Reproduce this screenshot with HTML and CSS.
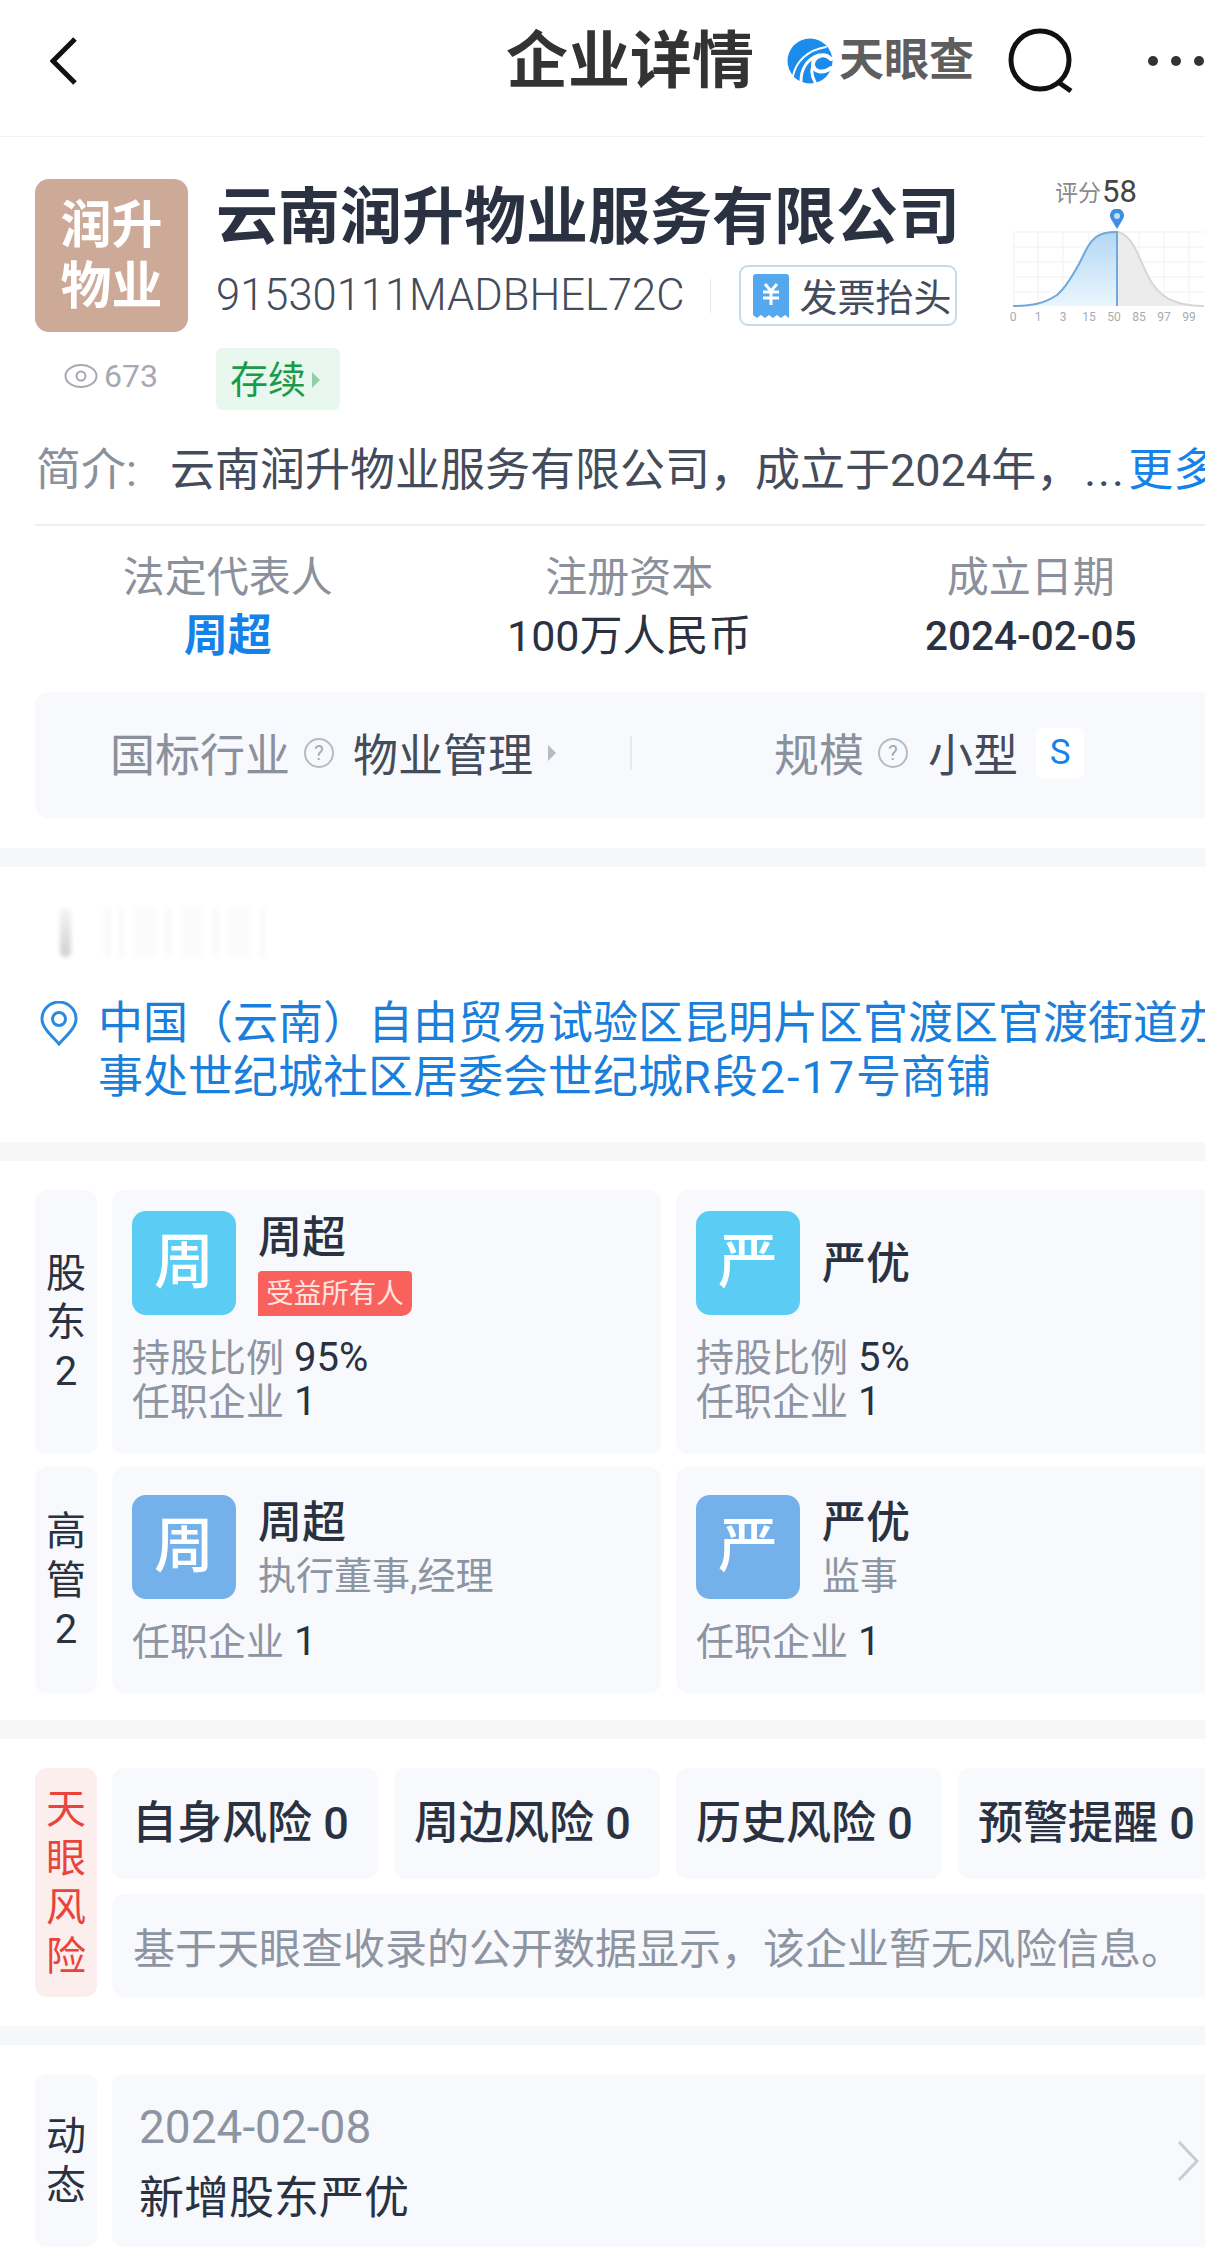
FILE: index.html
```html
<!DOCTYPE html>
<html lang="zh-CN">
<head>
    <meta charset="UTF-8">
    <meta name="viewport" content="width=device-width, initial-scale=1.0">
    <title>企业详情</title>
    <link rel="stylesheet" href="styles.css">
</head>
<body>
    <div id="page">
        <header class="top-bar">
            <svg class="back-icon" width="27" height="48" viewBox="0 0 27 48"><path d="M25 2 L3 24 L25 46" fill="none" stroke="#111" stroke-width="5"/></svg>
            <h1 class="page-title">企业详情</h1>
            <div class="brand">
                <svg class="brand-mark" width="46" height="46" viewBox="0 0 46 46">
                    <circle cx="23" cy="23" r="22.5" fill="#1b8ceb"/>
                    <g fill="none" stroke="#fff" stroke-linecap="round">
                        <path d="M6 38 C9 23 21 12 39 9" stroke-width="2"/>
                        <path d="M14 43 C14 31 20 21 32 17" stroke-width="3"/>
                        <path d="M44 21 C37 14 26 18 26 27 C27 34 36 36 44 30" stroke-width="4"/>
                        <path d="M28 44 C25 39 24 33 26 28" stroke-width="3"/>
                    </g>
                </svg>
                <span class="brand-name">天眼查</span>
            </div>
            <svg class="search-icon" width="66" height="66" viewBox="0 0 66 66"><circle cx="32" cy="32" r="29" fill="none" stroke="#111" stroke-width="5"/><path d="M50 54 L63 63" fill="none" stroke="#111" stroke-width="5"/></svg>
            <div class="dots"><i></i><i></i><i></i></div>
        </header>

        <section class="company">
            <div class="company-side">
                <div class="logo-box">润升<br>物业</div>
                <div class="views">
                    <svg width="34" height="26" viewBox="0 0 34 26"><ellipse cx="17" cy="13" rx="15.5" ry="11" fill="none" stroke="#a4a9b2" stroke-width="2"/><circle cx="17" cy="13" r="4.5" fill="none" stroke="#a4a9b2" stroke-width="2"/></svg>
                    <span>673</span>
                </div>
            </div>
            <div class="company-main">
                <h2 class="company-name">云南润升物业服务有限公司</h2>
                <div class="code-row">
                    <span class="credit-code">91530111MADBHEL72C</span>
                    <span class="code-sep"></span>
                    <span class="invoice">
                        <svg width="36" height="44" viewBox="0 0 36 44"><path d="M3 0 H33 Q36 0 36 3 V44 L32 41 L28 44 L24 41 L20 44 L16 41 L12 44 L8 41 L4 44 L0 41 V3 Q0 0 3 0 Z" fill="#53a8ee"/><path d="M12 10 L18 17 L24 10 M18 17 V31 M10 18 H26 M10 24 H26" fill="none" stroke="#fff" stroke-width="3"/></svg>
                        发票抬头
                    </span>
                </div>
                <div class="status">存续<i class="tri tri-green"></i></div>
            </div>
            <div class="score">
                <div class="score-title"><span>评分</span><b>58</b></div>
                <svg class="score-pin" width="14" height="20" viewBox="0 0 14 20"><path d="M7 20 L1 10 A7 7 0 1 1 13 10 Z" fill="#3f8fe0"/><circle cx="7" cy="7" r="3" fill="#bfe0fa"/></svg>
                <svg class="score-chart" width="191" height="94" viewBox="0 0 191 94">
                    <defs>
                        <linearGradient id="score-fill" x1="0" y1="0" x2="0" y2="1">
                            <stop offset="0" stop-color="#b4d7f4"/>
                            <stop offset="1" stop-color="#e9f6fd"/>
                        </linearGradient>
                    </defs>
                    <g stroke="#eef1f4" stroke-width="1">
                        <path d="M0 0 H191 M0 15 H191 M0 30 H191 M0 45 H191 M0 60 H191"/>
                        <path d="M1 0 V74 M25 0 V74 M50 0 V74 M76 0 V74 M126 0 V74 M151 0 V74 M176 0 V74"/>
                    </g>
                    <path d="M104 0 C112 1 118 8 123 18 C128 28 133 42 139 51 C145 60 153 67 163 70 C172 73 180 74 191 74 H104 Z" fill="#ececed"/>
                    <path d="M104 0 C112 1 118 8 123 18 C128 28 133 42 139 51 C145 60 153 67 163 70 C172 73 180 74 191 74" fill="none" stroke="#d6d7d9" stroke-width="2"/>
                    <path d="M0 74 C20 74 32 71 44 63 C54 55 60 42 66 32 C72 20 76 10 83 5 C88 1 94 0 104 0 V74 Z" fill="url(#score-fill)"/>
                    <path d="M0 74 C20 74 32 71 44 63 C54 55 60 42 66 32 C72 20 76 10 83 5 C88 1 94 0 104 0 V74" fill="none" stroke="#6ea8dc" stroke-width="2"/>
                    <g fill="#a3acb5" font-size="12" text-anchor="middle">
                        <text x="0" y="89">0</text><text x="25" y="89">1</text><text x="50" y="89">3</text><text x="76" y="89">15</text><text x="101" y="89">50</text><text x="126" y="89">85</text><text x="151" y="89">97</text><text x="176" y="89">99</text>
                    </g>
                </svg>
            </div>
        </section>

        <div class="intro"><span class="intro-label">简介:</span><span class="intro-text">云南润升物业服务有限公司，成立于2024年，</span><span class="ellipsis">...</span><span class="more">更多</span></div>

        <div class="stats">
            <div class="stat"><div class="stat-label">法定代表人</div><div class="stat-value link">周超</div></div>
            <div class="stat"><div class="stat-label">注册资本</div><div class="stat-value">100万人民币</div></div>
            <div class="stat"><div class="stat-label">成立日期</div><div class="stat-value date">2024-02-05</div></div>
        </div>

        <div class="industry">
            <span class="muted">国标行业</span>
            <span class="help help-a">?</span>
            <span class="strong">物业管理</span>
            <i class="tri tri-gray"></i>
            <span class="industry-sep"></span>
            <span class="muted">规模</span>
            <span class="help help-b">?</span>
            <span class="strong">小型</span>
            <span class="size-badge">S</span>
        </div>

        <div class="band band-first"></div>

        <section class="address">
            <div class="redacted"><i class="bar-a"></i><i class="bar-b"></i><i class="bar-b"></i><i class="bar-c"></i><i class="bar-b"></i><i class="bar-c"></i><i class="bar-b"></i><i class="bar-c"></i><i class="bar-b"></i></div>
            <div class="address-row">
                <svg width="38" height="45" viewBox="0 0 38 45"><path d="M19 43 C12 35 2 27 2 18 A17 17 0 0 1 36 18 C36 27 26 35 19 43 Z" fill="none" stroke="#2b8ae0" stroke-width="3"/><circle cx="19" cy="18" r="6.5" fill="none" stroke="#2b8ae0" stroke-width="3"/></svg>
                <div class="address-text">中国（云南）自由贸易试验区昆明片区官渡区官渡街道办<br>事处世纪城社区居委会世纪城<span class="address-num">R段2-17</span>号商铺</div>
            </div>
        </section>

        <div class="band"></div>

        <section class="people">
            <div class="side-label">股<br>东<br>2</div>
            <div class="card person">
                <div class="person-head">
                    <div class="avatar sky">周</div>
                    <div><div class="person-name">周超</div><div class="owner-tag">受益所有人</div></div>
                </div>
                <div class="person-stats"><div><span>持股比例</span> 95%</div><div><span>任职企业</span> 1</div></div>
            </div>
            <div class="card person">
                <div class="person-head">
                    <div class="avatar sky">严</div>
                    <div><div class="person-name">严优</div></div>
                </div>
                <div class="person-stats"><div><span>持股比例</span> 5%</div><div><span>任职企业</span> 1</div></div>
            </div>
            <div class="side-label">高<br>管<br>2</div>
            <div class="card person person-low">
                <div class="person-head">
                    <div class="avatar blue">周</div>
                    <div><div class="person-name">周超</div><div class="person-role">执行董事,经理</div></div>
                </div>
                <div class="person-stats"><div><span>任职企业</span> 1</div></div>
            </div>
            <div class="card person person-low">
                <div class="person-head">
                    <div class="avatar blue">严</div>
                    <div><div class="person-name">严优</div><div class="person-role">监事</div></div>
                </div>
                <div class="person-stats"><div><span>任职企业</span> 1</div></div>
            </div>
        </section>

        <div class="band"></div>

        <section class="risk">
            <div class="side-label red">天<br>眼<br>风<br>险</div>
            <div class="risk-body">
                <div class="risk-cards">
                    <div class="card risk-card">自身风险 0</div>
                    <div class="card risk-card">周边风险 0</div>
                    <div class="card risk-card">历史风险 0</div>
                    <div class="card risk-card">预警提醒 0</div>
                </div>
                <div class="card risk-note">基于天眼查收录的公开数据显示，该企业暂无风险信息。</div>
            </div>
        </section>

        <div class="band"></div>

        <section class="news">
            <div class="side-label">动<br>态</div>
            <div class="card news-card">
                <div class="news-date">2024-02-08</div>
                <div class="news-text">新增股东严优</div>
                <svg class="news-arrow" width="22" height="40" viewBox="0 0 22 40"><path d="M2 1 L20 20 L2 39" fill="none" stroke="#c9cdd3" stroke-width="3"/></svg>
            </div>
        </section>
    </div>
</body>
</html>
```

FILE: styles.css
```css
* {
    box-sizing: border-box;
}
body {
    margin: 0;
    background-color: #fff;
    font-family: Roboto, "Noto Sans CJK SC", sans-serif;
    color: #2a3242;
}
#page {
    width: 1205px;
    height: 2258px;
    overflow: hidden;
}
h1, h2 {
    margin: 0;
}

/* top bar */
.top-bar {
    display: flex;
    align-items: center;
    height: 137px;
    padding: 0 0 15px 50px;
    border-bottom: 1px solid #f1f2f3;
}
.back-icon {
    flex: none;
    margin-right: 429px;
}
.page-title {
    flex: none;
    padding-top: 3px;
    font-size: 62px;
    line-height: 72px;
    font-weight: 700;
    color: #333;
}
.brand {
    flex: none;
    display: flex;
    align-items: center;
    margin-left: 33px;
    margin-right: 34px;
}
.brand-mark {
    flex: none;
    margin-right: 6px;
}
.brand-name {
    font-size: 45px;
    line-height: 46px;
    font-weight: 700;
    color: #5e5e5e;
}
.search-icon {
    flex: none;
}
.dots {
    flex: none;
    display: flex;
    gap: 13px;
    margin-left: 74px;
}
.dots i {
    width: 10px;
    height: 10px;
    border-radius: 50%;
    background-color: #333;
}

/* company block */
.company {
    display: flex;
    height: 301px;
    padding: 42px 0 0 35px;
}
.company-side {
    flex: none;
    width: 153px;
    margin-right: 28px;
}
.logo-box {
    height: 153px;
    border-radius: 14px;
    background-color: #cda998;
    color: #fff;
    font-size: 51px;
    line-height: 61px;
    font-weight: 700;
    text-align: center;
    padding-top: 16px;
}
.views {
    display: flex;
    align-items: center;
    gap: 6px;
    margin-top: 31px;
    padding-left: 29px;
    font-size: 32px;
    line-height: 26px;
    color: #a4a9b2;
}
.company-main {
    flex: none;
    width: 742px;
}
.company-name {
    padding-top: 4px;
    font-size: 62px;
    line-height: 70px;
    font-weight: 700;
    white-space: nowrap;
    color: #2a3242;
}
.code-row {
    display: flex;
    align-items: center;
    height: 61px;
    margin-top: 12px;
}
.credit-code {
    font-size: 43.5px;
    font-weight: 300;
    color: #444c5c;
}
.code-sep {
    width: 1px;
    height: 34px;
    margin: 0 28px 0 26px;
    background-color: #e4e6e9;
}
.invoice {
    flex: none;
    display: flex;
    align-items: center;
    gap: 10px;
    width: 218px;
    height: 61px;
    padding: 0 0 3px 12px;
    border: 2px solid #c6dbe6;
    border-radius: 9px;
    font-size: 38px;
    color: #444c5c;
    white-space: nowrap;
}
.invoice svg {
    margin-top: 3px;
}
.status {
    display: flex;
    align-items: center;
    width: 124px;
    height: 62px;
    margin-top: 22px;
    padding: 2px 0 0 14px;
    border-radius: 6px;
    background-color: #e9f8ef;
    color: #1c9a4c;
    font-size: 38px;
    line-height: 60px;
}
.tri {
    display: inline-block;
    width: 0;
    height: 0;
    border-style: solid;
    border-color: transparent;
    border-width: 8px 0 8px 8px;
}
.tri-green {
    margin-left: 6px;
    border-left-color: #8fcfa7;
}
.tri-gray {
    margin: 0 74px 0 15px;
    border-left-color: #b6bac2;
}
.score {
    flex: none;
    display: flex;
    flex-direction: column;
    width: 191px;
    margin-left: 55px;
}
.score-title {
    display: flex;
    align-items: center;
    height: 30px;
    margin-top: -3px;
    margin-bottom: 3px;
    padding-left: 42px;
    color: #8a8a8a;
    font-size: 23px;
}
.score-title b {
    margin-left: 1px;
    font-size: 31px;
    font-weight: 400;
    color: #444;
}
.score-pin {
    margin: 0 0 0 97px;
}
.score-chart {
    overflow: visible;
    margin-top: 3px;
}

/* intro and stats */
.intro {
    display: flex;
    align-items: center;
    height: 88px;
    margin-left: 35px;
    padding: 0 0 21px 1px;
    border-bottom: 2px solid #eceef0;
    font-size: 45px;
    line-height: 60px;
    white-space: nowrap;
}
.intro span {
    flex: none;
}
.intro-label {
    width: 134px;
    color: #8a909c;
}
.intro-text {
    color: #444c5c;
}
.ellipsis {
    width: 47px;
    padding-left: 3px;
    color: #444c5c;
    letter-spacing: 2px;
}
.more {
    color: #1482e8;
}
.stats {
    display: grid;
    grid-template-columns: repeat(3, 401.5px);
    padding: 26px 0 0 27px;
}
.stat {
    text-align: center;
}
.stat-label {
    font-size: 42px;
    line-height: 52px;
    color: #8a909c;
}
.stat-value {
    margin-top: 6px;
    font-size: 43px;
    line-height: 52px;
    font-weight: 400;
    white-space: nowrap;
}
.stat-value.link {
    color: #1482e8;
    font-weight: 700;
    font-size: 44px;
}
.stat-value.date {
    font-weight: 500;
    font-size: 40.5px;
}

.industry {
    display: flex;
    align-items: center;
    width: 1190px;
    height: 126px;
    margin: 30px 0 0 35px;
    padding: 0 0 5px 75px;
    border-radius: 14px;
    background-color: #f7f9fc;
    font-size: 45px;
    white-space: nowrap;
}
.muted {
    color: #8a909c;
}
.strong {
    color: #444c5c;
}
.help {
    display: flex;
    align-items: center;
    justify-content: center;
    width: 30px;
    height: 30px;
    border: 2px solid #b6bac2;
    border-radius: 50%;
    color: #a4a9b2;
    font-size: 20px;
    line-height: 1;
}
.help-a {
    margin: 0 19px 0 14px;
}
.help-b {
    margin: 0 20px 0 14px;
}
.industry-sep {
    width: 2px;
    height: 34px;
    margin-right: 142px;
    background-color: #e7e9ee;
}
.size-badge {
    width: 48px;
    height: 50px;
    margin-left: 18px;
    border-radius: 5px;
    background-color: #fff;
    color: #1482e8;
    font-size: 35px;
    line-height: 50px;
    text-align: center;
}

.band {
    height: 19px;
    background-color: #f6f7f9;
}
.band-first {
    margin-top: 30px;
}

/* address */
.address {
    height: 275px;
    padding: 41px 0 0 35px;
}
.redacted {
    display: flex;
    align-items: stretch;
    gap: 11px;
    height: 49px;
    padding-left: 25px;
    filter: blur(2px);
}
.redacted i {
    display: block;
}
.bar-a {
    width: 11px;
    margin-right: 24px;
    border-radius: 6px;
    background: linear-gradient(#f5f5f5, #d0d0d0);
}
.bar-b {
    width: 3px;
    background-color: #f4f4f4;
}
.bar-c {
    width: 22px;
    background-color: #fbfbfb;
}
.address-row {
    display: flex;
    margin-top: 44px;
    padding-left: 5px;
    color: #1a7fdc;
}
.address-row svg {
    flex: none;
    margin-right: 20px;
}
.address-text {
    font-size: 45px;
    line-height: 54px;
    white-space: nowrap;
    margin-top: -4px;
}
.address-num {
    letter-spacing: 2px;
}

/* shared cards */
.card {
    border-radius: 12px;
    background-color: #f7f9fc;
}
.side-label {
    display: flex;
    align-items: center;
    justify-content: center;
    border-radius: 12px;
    background-color: #f7f9fc;
    font-size: 40px;
    line-height: 49px;
    text-align: center;
}
.side-label.red {
    background-color: #fdeeee;
    color: #e8443c;
}

/* people */
.people {
    display: grid;
    grid-template-columns: 62px 549px 548px;
    grid-template-rows: 264px 226px;
    column-gap: 15px;
    row-gap: 13px;
    padding: 29px 0 27px 35px;
}
.person {
    padding: 21px 20px 0;
}
.person-low {
    padding-top: 28px;
}
.person-head {
    display: flex;
    align-items: center;
    gap: 22px;
    height: 104px;
}
.avatar {
    flex: none;
    width: 104px;
    height: 104px;
    border-radius: 14px;
    color: #fff;
    font-size: 60px;
    line-height: 104px;
    font-weight: 500;
    text-align: center;
}
.sky {
    background-color: #5bcdf5;
}
.blue {
    background-color: #74b1ea;
}
.person-name {
    padding-top: 2px;
    font-size: 44px;
    line-height: 50px;
    font-weight: 500;
}
.owner-tag {
    width: 154px;
    height: 45px;
    margin-top: 8px;
    border-radius: 4px 4px 10px 0;
    background-color: #f9625c;
    color: #ffe4e0;
    font-size: 27.5px;
    line-height: 45px;
    text-align: center;
}
.person-role {
    margin-top: 5px;
    font-size: 38px;
    line-height: 46px;
    color: #8d94a2;
    white-space: nowrap;
}
.person-stats {
    margin-top: 21px;
    font-size: 40px;
    line-height: 44px;
}
.person-stats span {
    color: #8d94a2;
    font-size: 38px;
}

/* risk */
.risk {
    display: flex;
    gap: 15px;
    height: 287px;
    padding: 29px 0 0 35px;
}
.risk .side-label {
    flex: none;
    width: 62px;
    height: 229px;
}
.risk-body {
    flex: none;
    width: 1110px;
}
.risk-cards {
    display: grid;
    grid-template-columns: repeat(4, 266px);
    gap: 16px;
}
.risk-card {
    height: 111px;
    padding: 31px 0 0 20px;
    font-size: 45px;
    line-height: 50px;
    font-weight: 500;
    white-space: nowrap;
}
.risk-note {
    display: flex;
    align-items: center;
    height: 103px;
    margin-top: 15px;
    padding-left: 21px;
    color: #8d94a2;
    font-size: 42px;
    white-space: nowrap;
}

/* news */
.news {
    display: flex;
    gap: 15px;
    padding: 29px 0 0 35px;
}
.news .side-label {
    flex: none;
    width: 62px;
    height: 173px;
}
.news-card {
    position: relative;
    flex: none;
    width: 1110px;
    height: 173px;
    padding: 27px 0 0 27px;
}
.news-date {
    font-size: 46px;
    line-height: 52px;
    color: #8d94a2;
}
.news-text {
    margin-top: 20px;
    font-size: 45px;
    line-height: 52px;
}
.news-arrow {
    position: absolute;
    top: 67px;
    left: 1065px;
}
```
